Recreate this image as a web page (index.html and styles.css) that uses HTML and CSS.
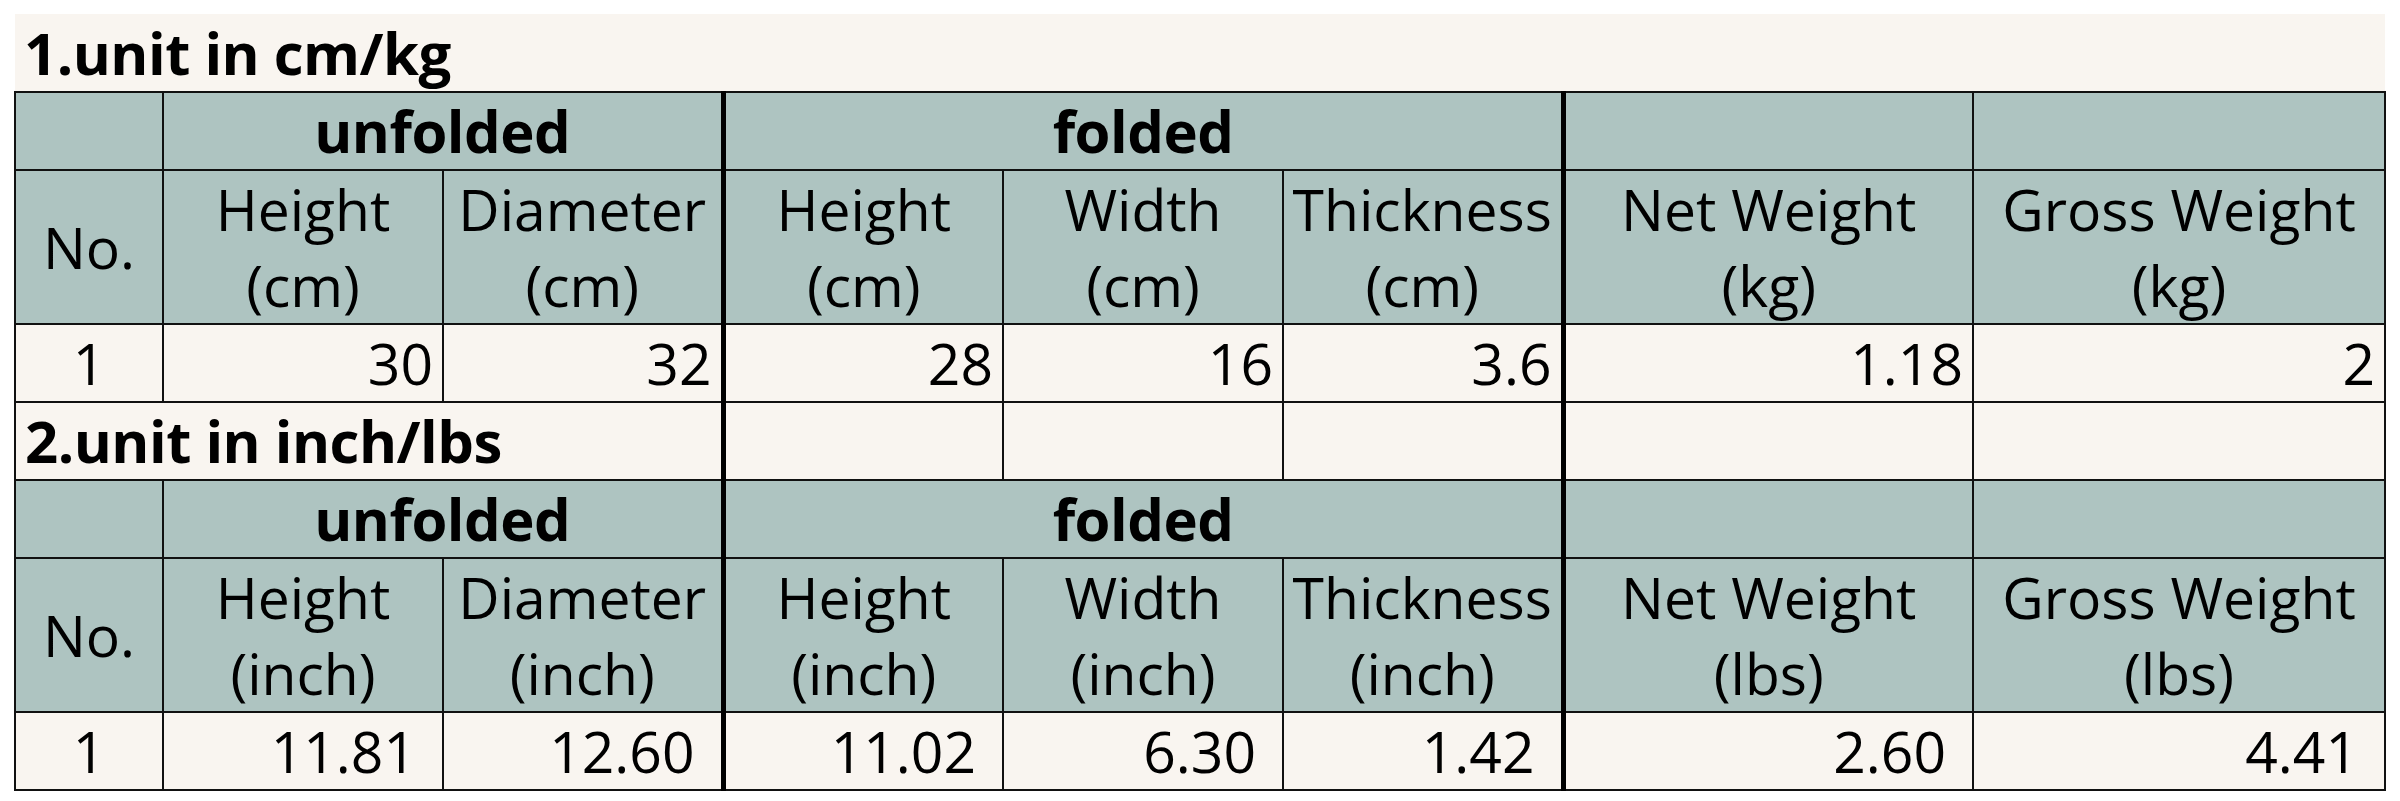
FILE: index.html
```html
<!DOCTYPE html>
<html>
<head>
<meta charset="utf-8">
<link rel="stylesheet" href="styles.css">
</head>
<body>
<div class="sheet">
<table class="spec">
  <colgroup>
    <col class="c-no"><col class="c-std"><col class="c-std"><col class="c-std"><col class="c-std"><col class="c-std"><col class="c-wide"><col class="c-wide2">
  </colgroup>
  <tr class="r-title first">
    <td colspan="8" class="title">1.unit in cm/kg</td>
  </tr>
  <tr class="r-group">
    <td class="hd"></td>
    <td class="hd grp" colspan="2">unfolded</td>
    <td class="hd grp tl" colspan="3">folded</td>
    <td class="hd tl"></td>
    <td class="hd"></td>
  </tr>
  <tr class="r-head">
    <td class="hd">No.</td>
    <td class="hd">Height<br>(cm)</td>
    <td class="hd">Diameter<br>(cm)</td>
    <td class="hd tl">Height<br>(cm)</td>
    <td class="hd">Width<br>(cm)</td>
    <td class="hd">Thickness<br>(cm)</td>
    <td class="hd tl">Net Weight<br>(kg)</td>
    <td class="hd">Gross Weight<br>(kg)</td>
  </tr>
  <tr class="r-data">
    <td class="no">1</td>
    <td class="num">30</td>
    <td class="num">32</td>
    <td class="num tl">28</td>
    <td class="num">16</td>
    <td class="num">3.6</td>
    <td class="num tl">1.18</td>
    <td class="num">2</td>
  </tr>
  <tr class="r-title second">
    <td colspan="3" class="title boxed">2.unit in inch/lbs</td>
    <td class="tl"></td>
    <td></td>
    <td></td>
    <td class="tl"></td>
    <td></td>
  </tr>
  <tr class="r-group">
    <td class="hd"></td>
    <td class="hd grp" colspan="2">unfolded</td>
    <td class="hd grp tl" colspan="3">folded</td>
    <td class="hd tl"></td>
    <td class="hd"></td>
  </tr>
  <tr class="r-head">
    <td class="hd">No.</td>
    <td class="hd">Height<br>(inch)</td>
    <td class="hd">Diameter<br>(inch)</td>
    <td class="hd tl">Height<br>(inch)</td>
    <td class="hd">Width<br>(inch)</td>
    <td class="hd">Thickness<br>(inch)</td>
    <td class="hd tl">Net Weight<br>(lbs)</td>
    <td class="hd">Gross Weight<br>(lbs)</td>
  </tr>
  <tr class="r-data r-data2">
    <td class="no">1</td>
    <td class="num">11.81</td>
    <td class="num">12.60</td>
    <td class="num tl">11.02</td>
    <td class="num">6.30</td>
    <td class="num">1.42</td>
    <td class="num tl">2.60</td>
    <td class="num">4.41</td>
  </tr>
</table>
</div>
</body>
</html>
```

FILE: styles.css
```css
html, body {
  margin: 0;
  padding: 0;
  background: #ffffff;
}

.sheet {
  padding: 14px 0 0 14px;
}

.spec {
  border-collapse: collapse;
  table-layout: fixed;
  width: 2372px;
  font-family: "Open Sans", "Noto Sans", sans-serif;
  font-size: 57px;
  line-height: 76px;
  color: #000;
}

.c-no { width: 148px; }
.c-std { width: 280px; }
.c-wide { width: 410px; }
.c-wide2 { width: 412px; }

.spec td {
  border: 2px solid #111;
  background: #f9f5f0;
  padding: 0;
  white-space: nowrap;
  overflow: hidden;
  text-align: center;
  vertical-align: middle;
}

.spec td.tl {
  border-left: 5px solid #000;
}

.spec td.hd {
  background: #aec4c1;
}

.spec td.grp {
  font-size: 58px;
  font-weight: 700;
  letter-spacing: -0.5px;
}

.spec td.title {
  font-size: 58px;
  font-weight: 700;
  text-align: left;
  vertical-align: bottom;
  padding-left: 9px;
  letter-spacing: -0.5px;
}

.r-title.first td {
  border: none;
  border-bottom: 2px solid #111;
}

.r-title.first { height: 78px; }
.r-group { height: 78px; }
.r-head { height: 150px; }
.r-data { height: 74px; }
.r-title.second { height: 76px; }

.spec td.num {
  text-align: right;
  padding-right: 9px;
}

.r-data2 td.num {
  padding-right: 26px;
}
```
